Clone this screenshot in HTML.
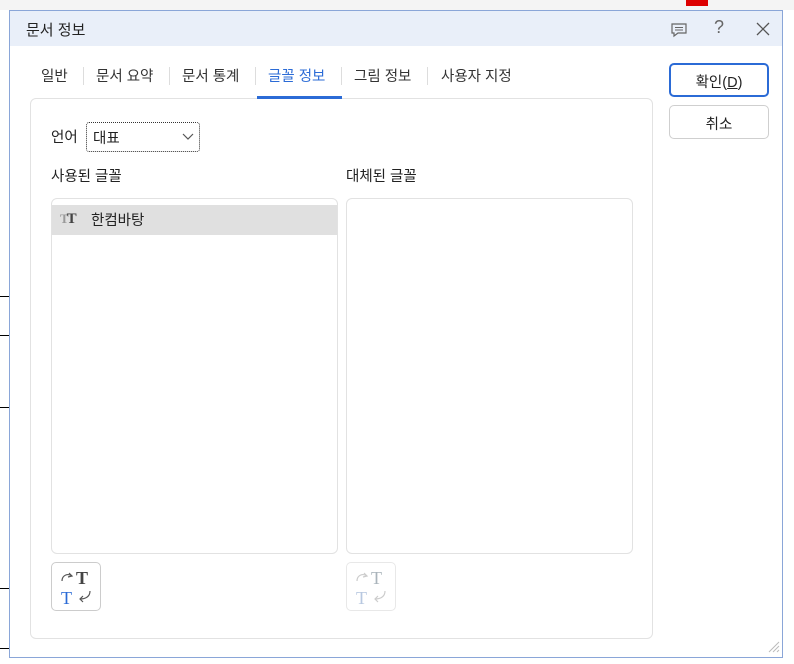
<!DOCTYPE html>
<html><head><meta charset="utf-8"><style>
*{box-sizing:border-box;margin:0;padding:0}
body{width:794px;height:664px;overflow:hidden;background:#fff;font-family:"Liberation Sans","Noto Sans CJK KR",sans-serif;font-size:14px;color:#222;position:relative}
.a{position:absolute}
.dlg{left:9px;top:10px;width:774px;height:648px;border:1px solid #8aa6d8;background:#fff}
.title{left:0;top:0;width:772px;height:35px;background:#e9eff9}
.tab{top:54px;font-size:14.5px;color:#333}
.sep{top:56px;width:1px;height:18px;background:#ddd}
.box{border:1px solid #e2e2e2;border-radius:6px;background:#fff}
.btn{border:1px solid #cfcfcf;border-radius:5px;background:#fff;text-align:center;font-size:14px}
.T{font-family:'Liberation Serif',serif;font-size:18px;font-weight:bold;line-height:18px}
</style></head><body>
<div class="a" style="left:0;top:0;width:794px;height:10px;background:#f4f4f4"></div>
<div class="a" style="left:0;top:296px;width:9px;height:1px;background:#000"></div>
<div class="a" style="left:0;top:335px;width:9px;height:1px;background:#000"></div>
<div class="a" style="left:0;top:407px;width:9px;height:1px;background:#000"></div>
<div class="a" style="left:0;top:588px;width:9px;height:1px;background:#000"></div>
<div class="a" style="left:0;top:648px;width:9px;height:1px;background:#000"></div>
<div class="a" style="left:686px;top:0;width:22px;height:6px;background:#d00"></div>

<div class="a dlg">
 <div class="a title"></div>
 <div class="a" style="left:16px;top:8px;font-size:15px;color:#222">문서 정보</div>
 <svg class="a" style="left:660px;top:10px" width="18" height="18" viewBox="0 0 18 18"><path d="M2 3h14v9H8l-4 3v-3H2z" fill="none" stroke="#666" stroke-width="1.2"/><path d="M5 6.5h8M5 9h8" stroke="#666"/></svg>
 <div class="a" style="left:704px;top:6px;font-size:18px;color:#666">?</div>
 <svg class="a" style="left:746px;top:11px" width="14" height="14"><path d="M1 1l12 12M13 1L1 13" stroke="#555" stroke-width="1.3"/></svg>

 <div class="a tab" style="left:31px">일반</div>
 <div class="a sep" style="left:73px"></div>
 <div class="a tab" style="left:86px">문서 요약</div>
 <div class="a sep" style="left:159px"></div>
 <div class="a tab" style="left:172px">문서 통계</div>
 <div class="a sep" style="left:245px"></div>
 <div class="a tab" style="left:258px;color:#2b6bd6">글꼴 정보</div>
 <div class="a sep" style="left:331px"></div>
 <div class="a tab" style="left:344px">그림 정보</div>
 <div class="a sep" style="left:417px"></div>
 <div class="a tab" style="left:431px">사용자 지정</div>

 <div class="a box" style="left:20px;top:87px;width:623px;height:541px"></div>
 <div class="a" style="left:247px;top:85px;width:85px;height:3px;background:#2b6bd6"></div>

 <div class="a" style="left:41px;top:115px;font-size:14.5px">언어</div>
 <div class="a" style="left:76px;top:111px;width:114px;height:30px;border:1px dotted #333;border-radius:3px;padding:4px 0 0 6px;font-size:14.5px">대표
  <svg class="a" style="left:95px;top:10px" width="12" height="8"><path d="M1 1l5 5 5-5" fill="none" stroke="#555" stroke-width="1.2"/></svg></div>

 <div class="a" style="left:41px;top:154px;font-size:14.5px">사용된 글꼴</div>
 <div class="a" style="left:336px;top:154px;font-size:14.5px">대체된 글꼴</div>

 <div class="a box" style="left:41px;top:187px;width:287px;height:356px"></div>
 <div class="a" style="left:42px;top:194px;width:285px;height:30px;background:#e0e0e0"></div>
 <div class="a" style="left:50px;top:200px;font-family:'Liberation Serif',serif;font-weight:bold;color:#999;font-size:13px">T<span style="color:#444;font-size:15px;margin-left:-2px">T</span></div>
 <div class="a" style="left:81px;top:198px;font-size:14.5px">한컴바탕</div>
 <div class="a box" style="left:336px;top:187px;width:287px;height:356px"></div>

 <div class="a btn" style="left:41px;top:551px;width:50px;height:49px;border-color:#ccc"></div>
 <svg class="a" style="left:50px;top:558px" width="34" height="38">
  <path d="M2 12 C2 6 8 4 12 7" fill="none" stroke="#555" stroke-width="1.2"/><path d="M9 4l3 3-4 1" fill="none" stroke="#555" stroke-width="1.2"/>
  <text x="16" y="15" font-family="Liberation Serif" font-weight="bold" font-size="18" fill="#444">T</text>
  <text x="1" y="35" font-family="Liberation Serif" font-size="18" fill="#2b6bd6">T</text>
  <path d="M30 22 C30 28 25 30 20 30" fill="none" stroke="#555" stroke-width="1.2"/><path d="M23 27l-3 3 3 3" fill="none" stroke="#555" stroke-width="1.2"/>
 </svg>
 <div class="a btn" style="left:336px;top:551px;width:50px;height:49px;border-color:#e8e8e8"></div>
 <svg class="a" style="left:345px;top:558px" width="34" height="38">
  <path d="M2 12 C2 6 8 4 12 7" fill="none" stroke="#ccc" stroke-width="1.2"/><path d="M9 4l3 3-4 1" fill="none" stroke="#ccc" stroke-width="1.2"/>
  <text x="16" y="15" font-family="Liberation Serif" font-size="18" fill="#aab4bb">T</text>
  <text x="1" y="35" font-family="Liberation Serif" font-size="18" fill="#b8c8e0">T</text>
  <path d="M30 22 C30 28 25 30 20 30" fill="none" stroke="#ccc" stroke-width="1.2"/><path d="M23 27l-3 3 3 3" fill="none" stroke="#ccc" stroke-width="1.2"/>
 </svg>

 <div class="a btn" style="left:659px;top:52px;width:100px;height:34px;border:2px solid #2b6bd6;padding-top:6px;font-size:14.5px">확인(<u>D</u>)</div>
 <div class="a btn" style="left:659px;top:94px;width:100px;height:34px;padding-top:7px;font-size:14.5px">취소</div>
 <svg class="a" style="left:758px;top:630px" width="12" height="12"><path d="M11 1L1 11M11 5L5 11M11 9L9 11" stroke="#bbb"/></svg>
</div>
</body></html>
